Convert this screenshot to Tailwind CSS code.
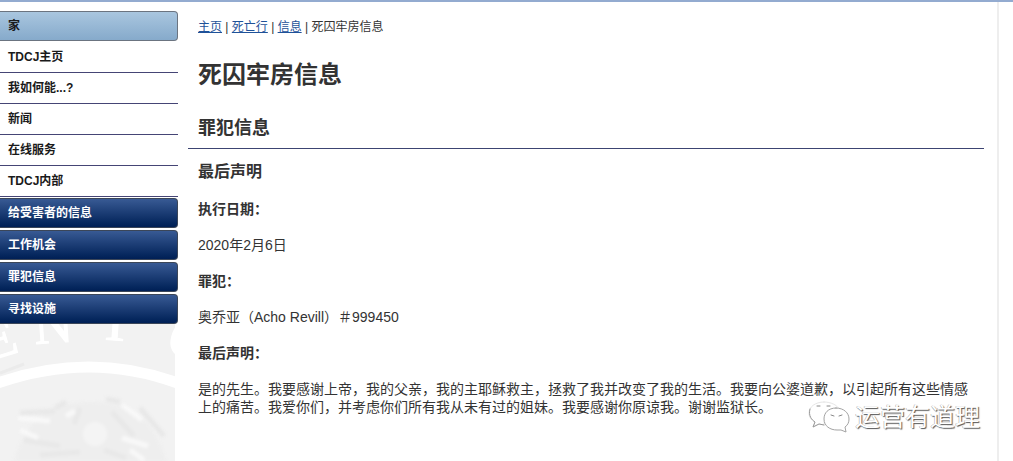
<!DOCTYPE html>
<html lang="zh-CN">
<head>
  <meta charset="UTF-8" />
  <meta name="viewport" content="width=device-width, initial-scale=1.0"/>
  <title>死囚牢房信息</title>
  <script src="https://cdn.jsdelivr.net/npm/@tailwindcss/browser@4"></script>
</head>
<body class="bg-white h-screen overflow-hidden border-t-2 border-[#93abd0] font-['Liberation_Sans','Noto_Sans_CJK_SC',sans-serif] text-[#333]">
  <div class="relative flex w-[999px] h-full border-r-2 border-[#eeeeee]">

    <!-- menú lateral -->
    <aside class="flex flex-col w-[178px] h-full shrink-0 pt-[9px] text-xs font-bold text-[#1a1a1a]">
      <a href="#" class="flex items-center h-[30px] shrink-0 pl-2 rounded-r border border-l-0 border-[#6b7480] bg-linear-to-b from-[#a9c6df] to-[#86aacb]">家</a>
      <nav class="flex flex-col shrink-0">
        <a href="#" class="flex items-center h-[32px] pt-px pl-2 border-b border-[#454575]">TDCJ主页</a>
        <a href="#" class="flex items-center h-[31px] pl-2 border-b border-[#454575]">我如何能...?</a>
        <a href="#" class="flex items-center h-[31px] pl-2 border-b border-[#454575]">新闻</a>
        <a href="#" class="flex items-center h-[31px] pl-2 border-b border-[#454575]">在线服务</a>
        <a href="#" class="flex items-center h-[31px] pl-2 border-b border-[#454575]">TDCJ内部</a>
      </nav>
      <nav class="flex flex-col shrink-0 gap-[2px] pt-px text-white">
        <a href="#" class="flex items-center h-[30px] pl-2 rounded-r border border-l-0 border-[#3b4658] bg-linear-to-b from-[#385a94] to-[#001f55]">给受害者的信息</a>
        <a href="#" class="flex items-center h-[30px] pl-2 rounded-r border border-l-0 border-[#3b4658] bg-linear-to-b from-[#385a94] to-[#001f55]">工作机会</a>
        <a href="#" class="flex items-center h-[30px] pl-2 rounded-r border border-l-0 border-[#3b4658] bg-linear-to-b from-[#385a94] to-[#001f55]">罪犯信息</a>
        <a href="#" class="flex items-center h-[30px] pl-2 rounded-r border border-l-0 border-[#3b4658] bg-linear-to-b from-[#385a94] to-[#001f55]">寻找设施</a>
      </nav>
      <!-- sello de fondo -->
      <svg class="w-[175px] h-[137px] shrink-0" viewBox="0 324 175 137">
        <rect x="0" y="324" width="175" height="137" fill="#f2f2f2"/>
        <path d="M-5 384 Q90 350 180 384" fill="none" stroke="#fff" stroke-width="11"/>
        <g class="font-['Liberation_Serif',serif] text-[54px] font-normal" fill="#fff" stroke="#fff" stroke-width="1">
          <text transform="translate(-11 361) rotate(-17)">E</text>
          <text transform="translate(35 344) rotate(-4)">N</text>
          <text transform="translate(98 339) rotate(4)">T</text>
          <text transform="translate(165 352) rotate(16)">O</text>
        </g>
        <path d="M0 373 L24 364" fill="none" stroke="#ebebeb" stroke-width="3"/>
        <g class="blur-[1.5px]" fill="none">
          <path d="M14 461 Q30 400 90 402 Q150 400 166 461 Z" fill="#eeeeee"/>
          <path d="M20 413 L55 411 M55 408 L66 402 M24 440 L60 446 M80 408 L74 424 M106 399 L120 402 M112 412 L134 436 M140 408 L164 436 M40 455 L80 452 M104 450 L126 458" stroke="#e8e8e8" stroke-width="5"/>
          <path d="M18 418 L50 421 M20 430 L38 438 M66 416 L75 411 M122 405 L142 420 M122 438 L148 446 M130 450 L144 460" stroke="#f8f8f8" stroke-width="5"/>
          <circle cx="95" cy="434" r="12" fill="#f4f4f4"/>
        </g>
      </svg>
    </aside>

    <main class="pl-[10px] w-[806px] shrink-0">
      <p class="pl-[10px] mt-[16px] h-[18px] leading-[18px] text-xs">
        <a href="#" class="text-[#1f5299] underline">主页</a> | <a href="#" class="text-[#1f5299] underline">死亡行</a> | <a href="#" class="text-[#1f5299] underline">信息</a> | 死囚牢房信息
      </p>
      <h1 class="pl-[10px] mt-[21px] h-[36px] leading-[36px] text-2xl font-bold">死囚牢房信息</h1>
      <h2 class="pl-[10px] mt-[22px] h-[34px] leading-[26px] text-lg font-bold border-b border-[#3c4472]">罪犯信息</h2>
      <div class="pl-[10px] text-sm leading-[18px]">
        <h3 class="mt-[13px] h-[20px] leading-[20px] text-base font-bold">最后声明</h3>
        <p class="mt-[18px] font-bold">执行日期：</p>
        <p class="mt-[18px]">2020年2月6日</p>
        <p class="mt-[18px] font-bold">罪犯：</p>
        <p class="mt-[18px]">奥乔亚（Acho Revill）＃999450</p>
        <p class="mt-[18px] font-bold">最后声明：</p>
        <p class="mt-[18px] whitespace-nowrap">是的先生。我要感谢上帝，我的父亲，我的主耶稣救主，拯救了我并改变了我的生活。我要向公婆道歉，以引起所有这些情感<br/>上的痛苦。我爱你们，并考虑你们所有我从未有过的姐妹。我要感谢你原谅我。谢谢监狱长。</p>
      </div>
    </main>

    <!-- marca de agua -->
    <div class="absolute left-[808px] top-[399px] flex items-center gap-[5px]">
      <svg class="w-[42px] h-[32px]" viewBox="808 401 42 32" fill="none" stroke-linecap="round">
        <path d="M824 402 C815 402 809 407 809 413 C809 417 811 420 815 422 L813 427 L819 424 L824 425 C824 415 831 410 839 409 C837 405 831 402 824 402 Z" fill="#fff" stroke="#e6e6e6"/>
        <path d="M810 409 C808 416 812 420 815 422 L813 427 L819 424 L824 425" stroke="#999"/>
        <path d="M836 408 C828 408 824 413 824 419 C824 426 830 430 837 430 L841 430 L846 432 L845 427 C848 425 849 422 849 419 C849 413 844 408 836 408 Z" fill="#fff" stroke="#a3a3a3"/>
        <path d="M817 406 h3 M827 406 h3 M831 415 l3 1 M839 416 l3 -1" stroke="#888"/>
      </svg>
      <span class="text-[25px] leading-[30px] text-white [text-shadow:1px_1px_1px_#555,-0.5px_-0.5px_0_#aaa]">运营有道理</span>
    </div>
  </div>
</body>
</html>
